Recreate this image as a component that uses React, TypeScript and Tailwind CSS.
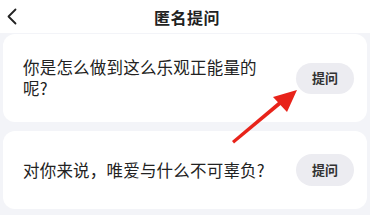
import React from 'react';

const questions = [
  { id: 1, text: '你是怎么做到这么乐观正能量的呢?' },
  { id: 2, text: '对你来说，唯爱与什么不可辜负?' },
];

const font = { fontFamily: '"Noto Sans CJK SC", "Noto Sans", sans-serif' };

export default function App() {
  return (
    <div className="relative w-[370px] h-[215px] overflow-hidden bg-[#f3f4f8]" style={font}>
      {/* Header */}
      <div className="relative flex items-center justify-center h-[33px] bg-white">
        <svg className="absolute left-[6px] top-[8px]" width="12" height="17" viewBox="0 0 12 17" fill="none">
          <path d="M9.5 1.5 L2.5 8.5 L9.5 15.5" stroke="#222" strokeWidth="1.8" strokeLinecap="round" strokeLinejoin="round" />
        </svg>
        <span className="ml-[4px] text-[16px] font-semibold text-[#222] tracking-[0.5px]">匿名提问</span>
      </div>

      {/* Question list */}
      <div className="flex flex-col gap-[9px] px-[3px] pt-[1px]">
        <div className="flex items-center justify-between h-[88px] bg-white rounded-[12px] pl-[20px] pr-[13px]">
          <p className="w-[240px] text-[16.5px] leading-[21px] text-[#222] tracking-[0.2px]">{questions[0].text}</p>
          <button className="w-[58px] h-[31px] rounded-full bg-[#ececf1] text-[13px] font-semibold text-[#333]">提问</button>
        </div>
        <div className="flex items-center justify-between h-[78px] bg-white rounded-[12px] pl-[20px] pr-[13px]">
          <p className="text-[16.5px] leading-[21px] text-[#222] tracking-[0.2px]">{questions[1].text}</p>
          <button className="w-[58px] h-[32px] rounded-full bg-[#ececf1] text-[13px] font-semibold text-[#333]">提问</button>
        </div>
      </div>

      {/* Annotation arrow */}
      <svg className="absolute left-0 top-0 pointer-events-none" width="370" height="215" viewBox="0 0 370 215">
        <polygon points="232,141 234,143.5 283,103 280.5,100" fill="#e8231a" />
        <polygon points="297,90 273,97 287,112" fill="#e8231a" />
      </svg>
    </div>
  );
}
